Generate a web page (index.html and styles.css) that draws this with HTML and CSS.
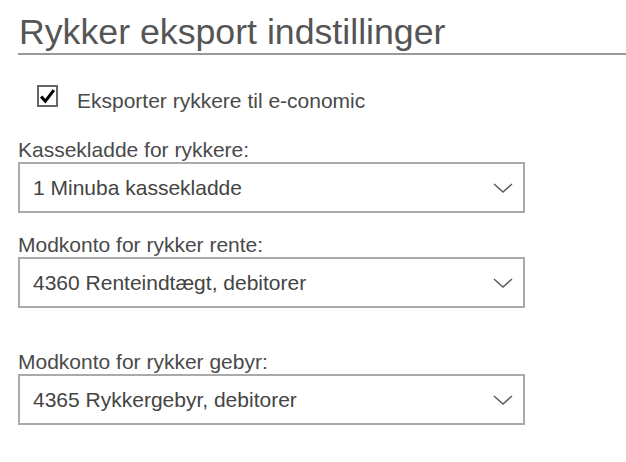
FILE: index.html
```html
<!DOCTYPE html>
<html lang="da">
<head>
<meta charset="utf-8">
<title>Rykker eksport indstillinger</title>
<link rel="stylesheet" href="styles.css">
</head>
<body>
<div class="page">
  <h1 class="title">Rykker eksport indstillinger</h1>
  <label class="check-row">
    <span class="checkbox">
      <svg viewBox="0 0 20 20" width="19" height="19"><path d="M2.5 10 L7.5 15.5 L17.5 2.5" fill="none" stroke="#000" stroke-width="3.6" stroke-linecap="butt" stroke-linejoin="miter"/></svg>
    </span>
    <span class="check-text">Eksporter rykkere til e-conomic</span>
  </label>

  <div class="field field-first">
    <div class="label">Kassekladde for rykkere:</div>
    <div class="select"><span>1 Minuba kassekladde</span><svg class="chev" viewBox="0 0 20 10" width="20" height="10"><path d="M1 1 L10 9 L19 1" fill="none" stroke="#5a5a5a" stroke-width="1.5"/></svg></div>
  </div>

  <div class="field">
    <div class="label">Modkonto for rykker rente:</div>
    <div class="select"><span>4360 Renteindtægt, debitorer</span><svg class="chev" viewBox="0 0 20 10" width="20" height="10"><path d="M1 1 L10 9 L19 1" fill="none" stroke="#5a5a5a" stroke-width="1.5"/></svg></div>
  </div>

  <div class="field field-spaced">
    <div class="label">Modkonto for rykker gebyr:</div>
    <div class="select"><span>4365 Rykkergebyr, debitorer</span><svg class="chev" viewBox="0 0 20 10" width="20" height="10"><path d="M1 1 L10 9 L19 1" fill="none" stroke="#5a5a5a" stroke-width="1.5"/></svg></div>
  </div>
</div>
</body>
</html>
```

FILE: styles.css
```css
html, body {
  margin: 0;
  padding: 0;
  background: #fff;
}
body {
  font-family: "Liberation Sans", Arial, sans-serif;
  color: #4a4a4a;
}
.page {
  padding-left: 18px;
}
.title {
  margin: 0;
  padding: 12px 0 1px 1px;
  font-size: 35.7px;
  line-height: 40px;
  font-weight: normal;
  color: #555;
  border-bottom: 2px solid #999;
}
.check-row {
  display: flex;
  align-items: flex-start;
  margin: 30px 0 0 19px;
}
.checkbox {
  box-sizing: border-box;
  width: 21px;
  height: 22px;
  border: 2px solid #666;
  display: flex;
  align-items: center;
  justify-content: center;
  background: #fff;
}
.check-text {
  margin-left: 19px;
  padding-top: 5px;
  font-size: 21px;
  line-height: 22px;
}
.field {
  width: 507px;
  margin-top: 20px;
}
.field-first {
  margin-top: 26px;
}
.field-spaced {
  margin-top: 42px;
}
.label {
  font-size: 21px;
  line-height: 23px;
  margin-bottom: 1px;
}
.select {
  box-sizing: border-box;
  height: 51px;
  border: 2px solid #aaa;
  display: flex;
  align-items: center;
  justify-content: space-between;
  padding: 0 10px 0 13px;
  font-size: 21px;
  color: #444;
}
.chev {
  display: block;
}
```
